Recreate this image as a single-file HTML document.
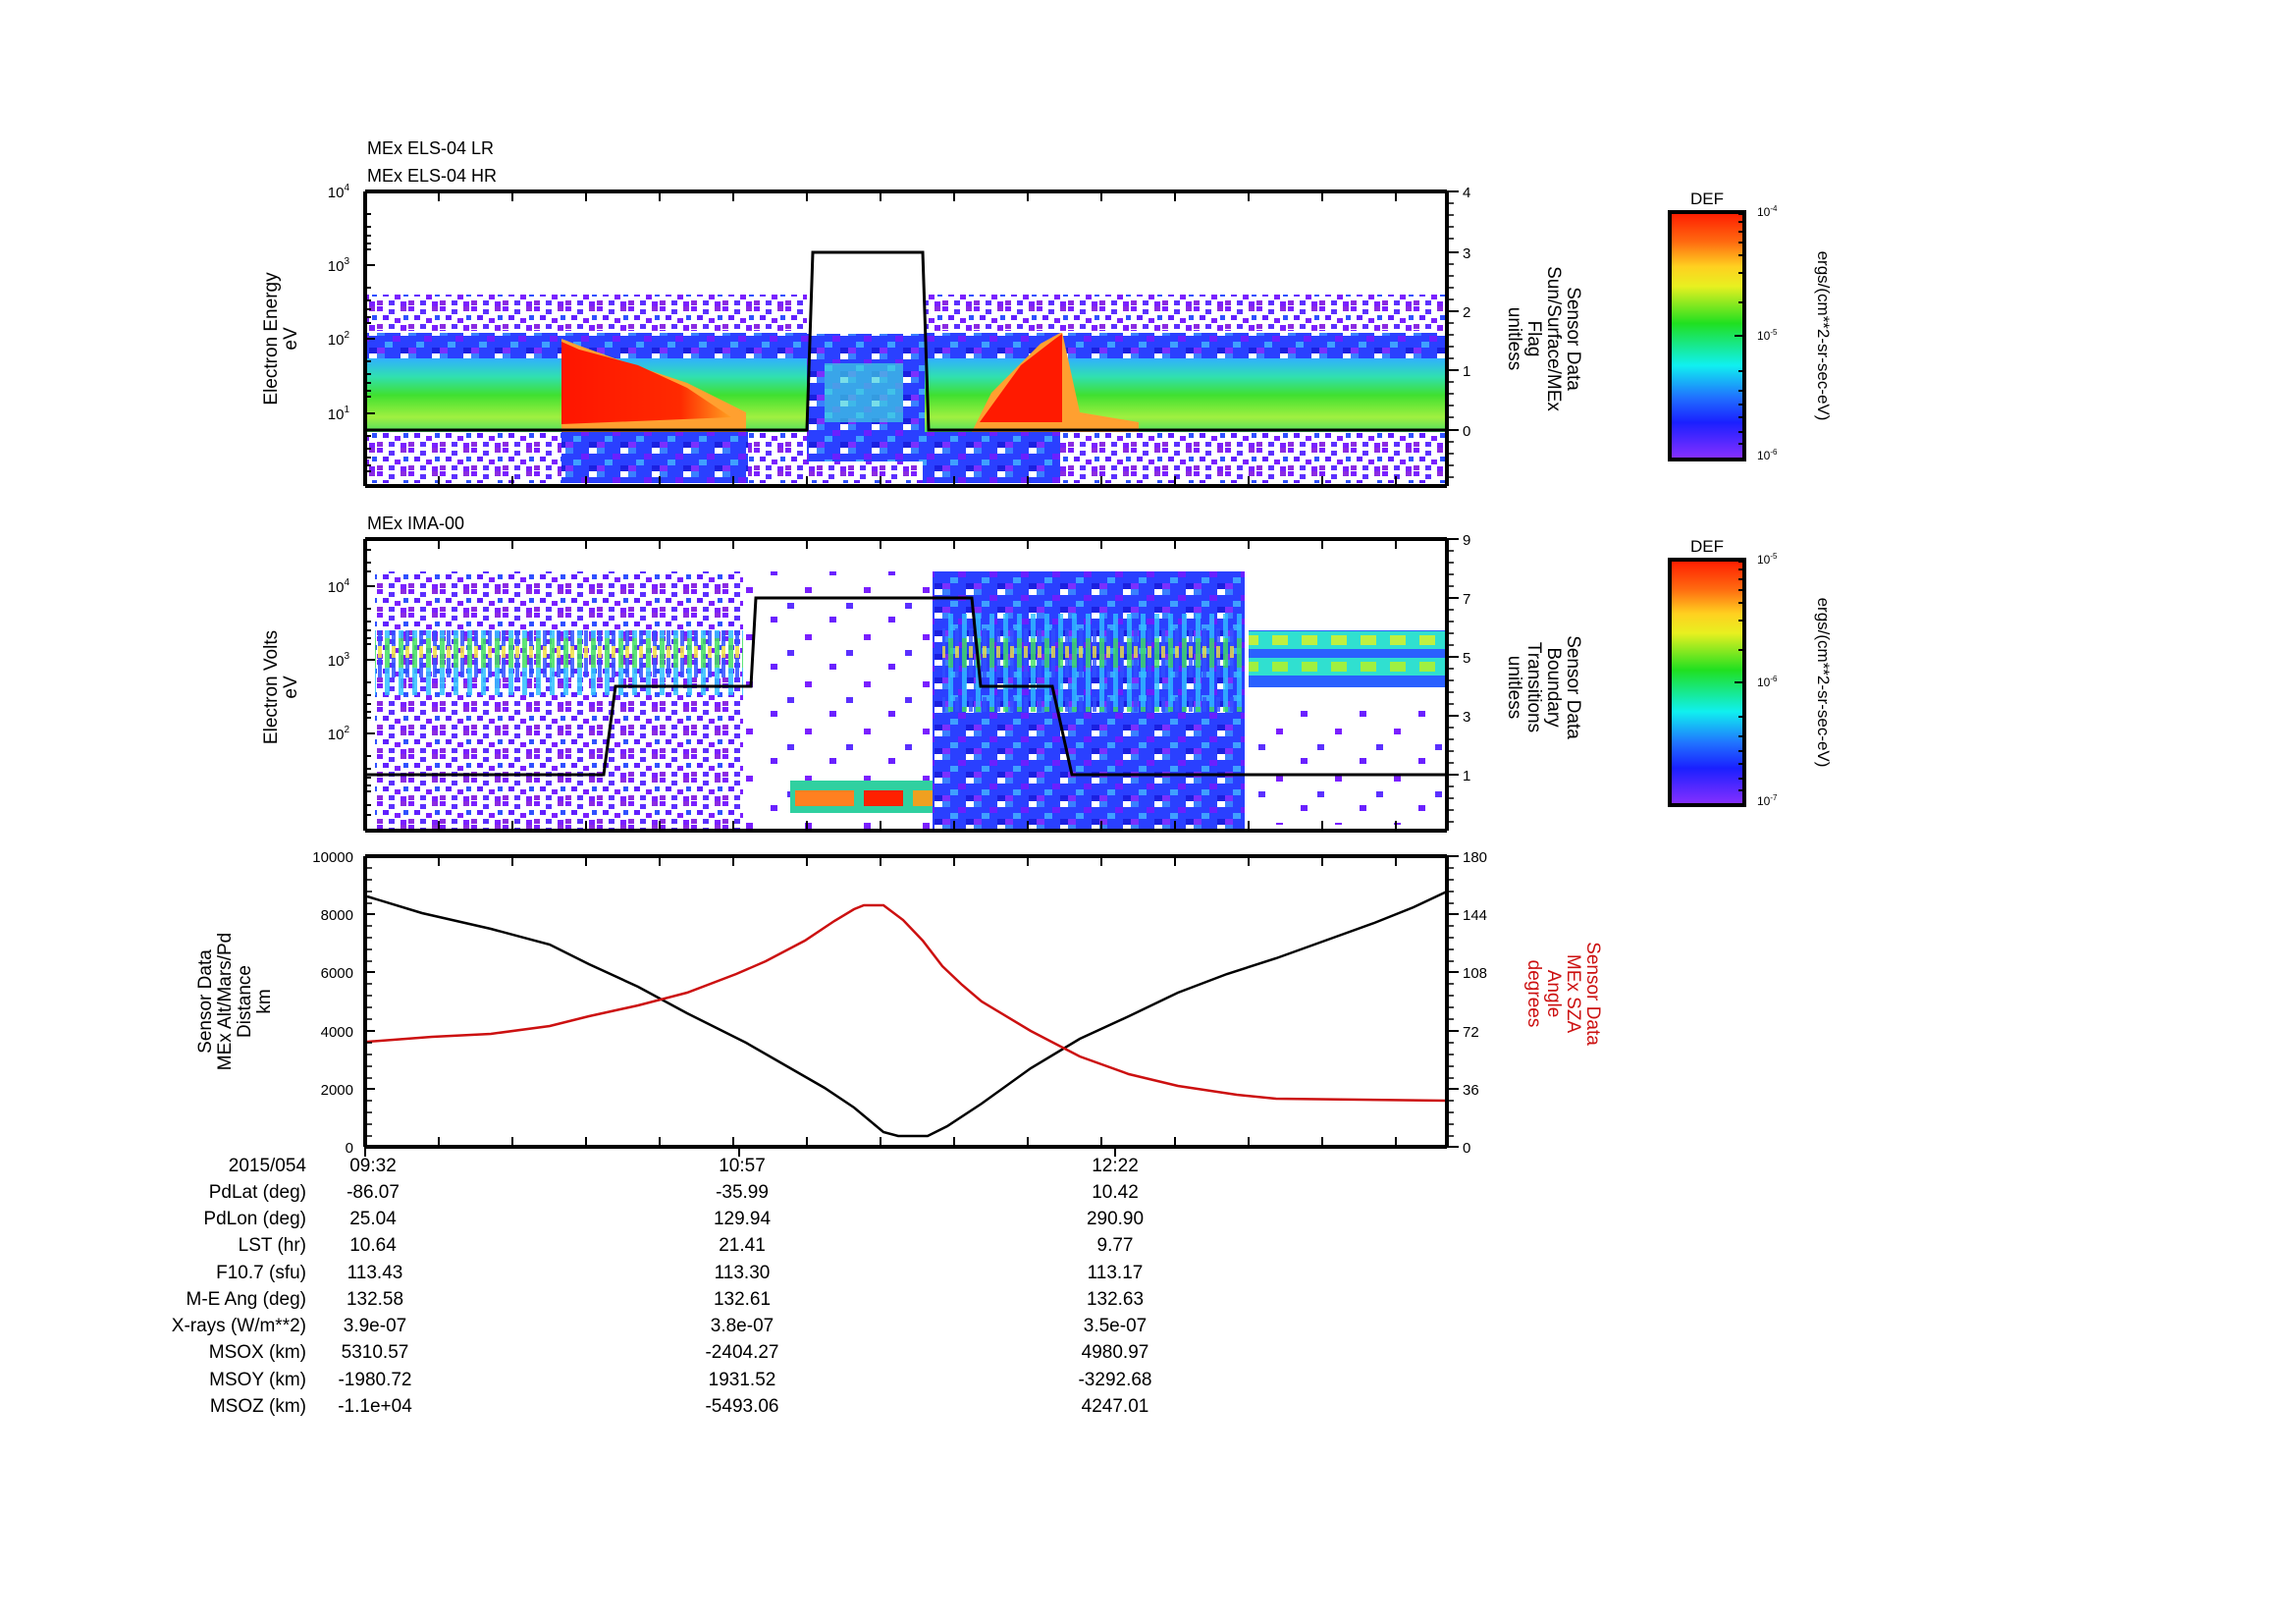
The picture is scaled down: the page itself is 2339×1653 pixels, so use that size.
<!DOCTYPE html>
<html><head><meta charset="utf-8"><style>
html,body{margin:0;padding:0;background:#fff;}
svg{display:block;font-family:"Liberation Sans",sans-serif;}
</style></head><body>
<svg width="2339" height="1653" viewBox="0 0 2339 1653" xmlns="http://www.w3.org/2000/svg">
<defs>
<linearGradient id="cb" x1="0" y1="0" x2="0" y2="1">
<stop offset="0" stop-color="#ff1a00"/><stop offset="0.12" stop-color="#ff6a10"/><stop offset="0.22" stop-color="#ffd020"/><stop offset="0.3" stop-color="#e8f020"/><stop offset="0.45" stop-color="#20e020"/><stop offset="0.62" stop-color="#10f0f0"/><stop offset="0.75" stop-color="#2070ff"/><stop offset="0.85" stop-color="#1a20ff"/><stop offset="1" stop-color="#8a30ff"/>
</linearGradient>
<linearGradient id="band" x1="0" y1="0" x2="0" y2="1">
<stop offset="0" stop-color="#30b0ff"/><stop offset="0.25" stop-color="#30e0b0"/><stop offset="0.5" stop-color="#40e030"/><stop offset="0.8" stop-color="#a0f040"/><stop offset="1" stop-color="#50e060"/>
</linearGradient>
<linearGradient id="red" x1="0" y1="0" x2="1" y2="0">
<stop offset="0" stop-color="#ff1500"/><stop offset="0.7" stop-color="#ff2a00"/><stop offset="1" stop-color="#ffa020"/>
</linearGradient>
<pattern id="pn" width="32" height="24" patternUnits="userSpaceOnUse">
<rect x="0" y="0" width="6" height="5" fill="#7a1fff"/><rect x="12" y="3" width="6" height="5" fill="#5b30ff"/><rect x="24" y="0" width="6" height="5" fill="#8a2be2"/><rect x="6" y="9" width="6" height="5" fill="#6020ff"/><rect x="18" y="12" width="6" height="5" fill="#7a1fff"/><rect x="27" y="9" width="5" height="5" fill="#3050ff"/><rect x="0" y="18" width="6" height="5" fill="#8a2be2"/><rect x="12" y="18" width="6" height="5" fill="#5b30ff"/><rect x="24" y="19" width="6" height="5" fill="#7a1fff"/>
</pattern>
<pattern id="bn" width="32" height="24" patternUnits="userSpaceOnUse">
<rect width="32" height="24" fill="#2a40ff"/><rect x="0" y="0" width="8" height="6" fill="#3a80ff"/><rect x="16" y="6" width="8" height="6" fill="#6a20ff"/><rect x="8" y="12" width="8" height="6" fill="#40a0ff"/><rect x="24" y="18" width="8" height="6" fill="#1a20e0"/><rect x="24" y="0" width="8" height="6" fill="#fff"/><rect x="0" y="18" width="8" height="6" fill="#7a30ff"/>
</pattern>
<pattern id="sp" width="60" height="48" patternUnits="userSpaceOnUse">
<rect x="5" y="4" width="7" height="6" fill="#6a20ff"/><rect x="40" y="22" width="7" height="6" fill="#7a1fff"/><rect x="22" y="38" width="7" height="6" fill="#5b30ff"/>
</pattern>
<pattern id="st" width="14" height="70" patternUnits="userSpaceOnUse">
<rect x="0" y="0" width="5" height="70" fill="#30c0ff"/><rect x="0" y="20" width="5" height="30" fill="#40e060"/><rect x="7" y="10" width="4" height="50" fill="#3050ff"/><rect x="7" y="28" width="4" height="12" fill="#f0e040"/>
</pattern>
<pattern id="bd" width="30" height="58" patternUnits="userSpaceOnUse">
<rect width="30" height="58" fill="#2a60ff"/><rect x="0" y="5" width="30" height="18" fill="#30e0d0"/><rect x="6" y="9" width="16" height="10" fill="#c0f040"/><rect x="0" y="32" width="30" height="18" fill="#30e0d0"/><rect x="6" y="36" width="16" height="10" fill="#a0f040"/>
</pattern>
</defs>

<!-- Panel 1 -->
<rect x="374" y="300" width="1098" height="40" fill="url(#pn)"/>
<rect x="374" y="338" width="1098" height="32" fill="url(#bn)"/>
<rect x="374" y="365" width="1098" height="75" fill="url(#band)"/>
<rect x="374" y="440" width="1098" height="52" fill="url(#pn)"/>
<rect x="572" y="440" width="190" height="52" fill="url(#bn)"/>
<rect x="940" y="440" width="140" height="52" fill="url(#bn)"/>
<rect x="822" y="300" width="120" height="70" fill="#fff"/>
<rect x="822" y="340" width="120" height="130" fill="url(#bn)"/>
<rect x="840" y="370" width="80" height="60" fill="#40d0e0" opacity="0.7"/>
<path d="M572 440 L572 345 L590 352 L640 370 L700 390 L760 420 L760 440 Z" fill="#ffa030"/>
<path d="M572 432 L572 348 L590 356 L650 372 L700 395 L745 425 Z" fill="url(#red)"/>
<path d="M990 440 L1010 400 L1060 350 L1082 338 L1100 420 L1160 430 L1160 440 Z" fill="#ffa030"/>
<path d="M998 430 L1040 372 L1075 345 L1082 340 L1082 430 Z" fill="#ff1a00"/>
<line x1="374" y1="338" x2="1472" y2="338" stroke="#fff" stroke-width="2"/>
<polyline points="374,438 822,438 828,257 940,257 946,438 1472,438" fill="none" stroke="#000" stroke-width="3"/>

<!-- Panel 2 -->
<rect x="382" y="582" width="375" height="262" fill="url(#pn)"/>
<rect x="382" y="642" width="375" height="66" fill="url(#st)" opacity="0.85"/>
<rect x="757" y="582" width="193" height="262" fill="url(#sp)"/>
<rect x="805" y="795" width="165" height="33" fill="#30d0a0"/>
<rect x="810" y="805" width="60" height="16" fill="#ff8020"/>
<rect x="880" y="805" width="40" height="16" fill="#ff2000"/>
<rect x="930" y="805" width="35" height="16" fill="#f0a020"/>
<rect x="950" y="582" width="318" height="262" fill="url(#bn)"/>
<rect x="960" y="625" width="305" height="100" fill="url(#st)" opacity="0.8"/>
<rect x="1272" y="642" width="200" height="58" fill="url(#bd)"/>
<rect x="1280" y="720" width="190" height="120" fill="url(#sp)"/>
<polyline points="374,789 615,789 627,699 765,699 770,609 990,609 999,699 1072,699 1092,789 1472,789" fill="none" stroke="#000" stroke-width="3"/>

<!-- Panel 3 curves -->
<polyline points="374,913 430,930 500,946 560,962 600,982 650,1005 700,1032 760,1062 800,1085 840,1108 870,1128 900,1153 915,1157 945,1157 965,1147 1000,1124 1050,1088 1100,1058 1150,1035 1200,1011 1250,992 1300,976 1350,958 1400,940 1440,924 1474,908" fill="none" stroke="#000" stroke-width="2.5"/>
<polyline points="374,1061 440,1056 500,1053 560,1045 600,1035 650,1024 700,1011 750,992 780,979 820,958 850,938 870,926 880,922 900,922 920,937 940,958 960,984 980,1003 1000,1020 1050,1050 1100,1076 1150,1094 1200,1106 1260,1115 1300,1119 1474,1121" fill="none" stroke="#cc1010" stroke-width="2.5"/>

<!-- Axes frames -->
<g stroke="#000" fill="none">
<path d="M372 195 V495 M1474 195 V495 M372 195 H1474 M372 495 H1474" stroke-width="4"/>
<path d="M372 549 V846 M1474 549 V846 M372 549 H1474 M372 846 H1474" stroke-width="4"/>
<path d="M372 872 V1168 M1474 872 V1168 M372 872 H1474 M372 1168 H1474" stroke-width="4"/>
</g>
<g stroke="#000" stroke-width="2">
<path d="M447 195v10M522 195v10M597 195v10M672 195v10M747 195v10M822 195v10M897 195v10M972 195v10M1047 195v10M1122 195v10M1197 195v10M1272 195v10M1347 195v10M1422 195v10
M447 495v-10M522 495v-10M597 495v-10M672 495v-10M747 495v-10M822 495v-10M897 495v-10M972 495v-10M1047 495v-10M1122 495v-10M1197 495v-10M1272 495v-10M1347 495v-10M1422 495v-10
M447 549v10M522 549v10M597 549v10M672 549v10M747 549v10M822 549v10M897 549v10M972 549v10M1047 549v10M1122 549v10M1197 549v10M1272 549v10M1347 549v10M1422 549v10
M447 846v-10M522 846v-10M597 846v-10M672 846v-10M747 846v-10M822 846v-10M897 846v-10M972 846v-10M1047 846v-10M1122 846v-10M1197 846v-10M1272 846v-10M1347 846v-10M1422 846v-10
M447 872v10M522 872v10M597 872v10M672 872v10M747 872v10M822 872v10M897 872v10M972 872v10M1047 872v10M1122 872v10M1197 872v10M1272 872v10M1347 872v10M1422 872v10
M447 1168v-10M522 1168v-10M597 1168v-10M672 1168v-10M747 1168v-10M822 1168v-10M897 1168v-10M972 1168v-10M1047 1168v-10M1122 1168v-10M1197 1168v-10M1272 1168v-10M1347 1168v-10M1422 1168v-10
M372 1168v10M753 1168v10M1136 1168v10"/>
<path d="M372 195h10M372 270h10M372 345h10M372 421h10M372 218h6M372 231h6M372 240h6M372 248h6M372 254h6M372 293h6M372 306h6M372 315h6M372 323h6M372 329h6M372 368h6M372 381h6M372 390h6M372 398h6M372 404h6M372 444h6M372 457h6M372 466h6M372 474h6M372 480h6"/>
<path d="M372 597h10M372 672h10M372 747h10M372 620h6M372 633h6M372 642h6M372 650h6M372 656h6M372 695h6M372 708h6M372 717h6M372 725h6M372 731h6M372 770h6M372 783h6M372 792h6M372 800h6M372 806h6M372 820h6M372 830h6M372 560h6M372 573h6M372 582h6"/>
<path d="M1474 195h12M1474 257h12M1474 317h12M1474 377h12M1474 438h12M1474 549h12M1474 609h12M1474 669h12M1474 729h12M1474 789h12M1474 872h12M1474 931h12M1474 990h12M1474 1050h12M1474 1109h12M1474 1168h12M372 931h10M372 990h10M372 1050h10M372 1109h10"/>
</g>
<g stroke="#000" stroke-width="1.5">
<path d="M1474 207h7M1474 219h7M1474 231h7M1474 243h7M1474 269h7M1474 281h7M1474 293h7M1474 305h7M1474 329h7M1474 341h7M1474 353h7M1474 365h7M1474 389h7M1474 401h7M1474 413h7M1474 425h7M1474 450h7M1474 462h7M1474 474h7M1474 486h7
M1474 561h7M1474 573h7M1474 585h7M1474 597h7M1474 621h7M1474 633h7M1474 645h7M1474 657h7M1474 681h7M1474 693h7M1474 705h7M1474 717h7M1474 741h7M1474 753h7M1474 765h7M1474 777h7M1474 801h7M1474 813h7M1474 825h7M1474 837h7
M1474 884h7M1474 896h7M1474 908h7M1474 920h7M1474 943h7M1474 955h7M1474 967h7M1474 979h7M1474 1002h7M1474 1014h7M1474 1026h7M1474 1038h7M1474 1062h7M1474 1074h7M1474 1086h7M1474 1098h7M1474 1121h7M1474 1133h7M1474 1145h7M1474 1157h7
M372 884h7M372 896h7M372 908h7M372 920h7M372 943h7M372 955h7M372 967h7M372 979h7M372 1002h7M372 1014h7M372 1026h7M372 1038h7M372 1062h7M372 1074h7M372 1086h7M372 1098h7M372 1121h7M372 1133h7M372 1145h7M372 1157h7"/>
</g>

<g font-size="18" fill="#000">
<text x="374" y="157">MEx ELS-04 LR</text>
<text x="374" y="185">MEx ELS-04 HR</text>
<text x="374" y="539">MEx IMA-00</text>
</g>
<g font-size="15" fill="#000" text-anchor="end">
<text x="356" y="201">10<tspan dy="-7" font-size="10">4</tspan></text>
<text x="356" y="276">10<tspan dy="-7" font-size="10">3</tspan></text>
<text x="356" y="351">10<tspan dy="-7" font-size="10">2</tspan></text>
<text x="356" y="427">10<tspan dy="-7" font-size="10">1</tspan></text>
<text x="356" y="603">10<tspan dy="-7" font-size="10">4</tspan></text>
<text x="356" y="678">10<tspan dy="-7" font-size="10">3</tspan></text>
<text x="356" y="753">10<tspan dy="-7" font-size="10">2</tspan></text>
<text x="360" y="878">10000</text><text x="360" y="937">8000</text><text x="360" y="996">6000</text><text x="360" y="1056">4000</text><text x="360" y="1115">2000</text><text x="360" y="1174">0</text>
</g>
<g font-size="15" fill="#000">
<text x="1490" y="201">4</text><text x="1490" y="263">3</text><text x="1490" y="323">2</text><text x="1490" y="383">1</text><text x="1490" y="444">0</text>
<text x="1490" y="555">9</text><text x="1490" y="615">7</text><text x="1490" y="675">5</text><text x="1490" y="735">3</text><text x="1490" y="795">1</text>
<text x="1490" y="878">180</text><text x="1490" y="937">144</text><text x="1490" y="996">108</text><text x="1490" y="1056">72</text><text x="1490" y="1115">36</text><text x="1490" y="1174">0</text>
</g>

<g font-size="19" fill="#000" text-anchor="middle">
<text transform="translate(282,345) rotate(-90)">Electron Energy</text>
<text transform="translate(302,345) rotate(-90)">eV</text>
<text transform="translate(282,700) rotate(-90)">Electron Volts</text>
<text transform="translate(302,700) rotate(-90)">eV</text>
<text transform="translate(215,1020) rotate(-90)">Sensor Data</text>
<text transform="translate(235,1020) rotate(-90)">MEx Alt/Mars/Pd</text>
<text transform="translate(255,1020) rotate(-90)">Distance</text>
<text transform="translate(275,1020) rotate(-90)">km</text>
<text transform="translate(1597,345) rotate(90)">Sensor Data</text>
<text transform="translate(1577,345) rotate(90)">Sun/Surface/MEx</text>
<text transform="translate(1557,345) rotate(90)">Flag</text>
<text transform="translate(1537,345) rotate(90)">unitless</text>
<text transform="translate(1597,700) rotate(90)">Sensor Data</text>
<text transform="translate(1577,700) rotate(90)">Boundary</text>
<text transform="translate(1557,700) rotate(90)">Transitions</text>
<text transform="translate(1537,700) rotate(90)">unitless</text>
<g fill="#cc1010">
<text transform="translate(1617,1012) rotate(90)">Sensor Data</text>
<text transform="translate(1597,1012) rotate(90)">MEx SZA</text>
<text transform="translate(1577,1012) rotate(90)">Angle</text>
<text transform="translate(1557,1012) rotate(90)">degrees</text>
</g>
</g>

<rect x="1701" y="216" width="76" height="252" fill="url(#cb)" stroke="#000" stroke-width="4"/>
<rect x="1701" y="570" width="76" height="250" fill="url(#cb)" stroke="#000" stroke-width="4"/>
<g stroke="#000" stroke-width="2">
<path d="M1777 218h-6M1777 226h-6M1777 236h-6M1777 247h-6M1777 260h-6M1777 278h-6M1777 308h-6M1777 342h-10M1777 378h-6M1777 398h-6M1777 412h-6M1777 425h-6M1777 440h-6M1777 452h-6"/>
<path d="M1777 572h-6M1777 580h-6M1777 590h-6M1777 601h-6M1777 614h-6M1777 632h-6M1777 662h-6M1777 695h-10M1777 730h-6M1777 750h-6M1777 765h-6M1777 778h-6M1777 793h-6M1777 805h-6"/>
</g>
<g font-size="17" fill="#000" text-anchor="middle"><text x="1739" y="208">DEF</text><text x="1739" y="562">DEF</text></g>
<g font-size="12" fill="#000">
<text x="1790" y="220">10<tspan dy="-5" font-size="8">-4</tspan></text>
<text x="1790" y="346">10<tspan dy="-5" font-size="8">-5</tspan></text>
<text x="1790" y="468">10<tspan dy="-5" font-size="8">-6</tspan></text>
<text x="1790" y="574">10<tspan dy="-5" font-size="8">-5</tspan></text>
<text x="1790" y="699">10<tspan dy="-5" font-size="8">-6</tspan></text>
<text x="1790" y="820">10<tspan dy="-5" font-size="8">-7</tspan></text>
</g>
<g font-size="17" fill="#000" text-anchor="middle">
<text transform="translate(1852,342) rotate(90)">ergs/(cm**2-sr-sec-eV)</text>
<text transform="translate(1852,695) rotate(90)">ergs/(cm**2-sr-sec-eV)</text>
</g>

<g font-size="19" fill="#000">
<g text-anchor="end">
<text x="312" y="1193">2015/054</text><text x="312" y="1220">PdLat (deg)</text><text x="312" y="1247">PdLon (deg)</text><text x="312" y="1274">LST (hr)</text><text x="312" y="1302">F10.7 (sfu)</text><text x="312" y="1329">M-E Ang (deg)</text><text x="312" y="1356">X-rays (W/m**2)</text><text x="312" y="1383">MSOX (km)</text><text x="312" y="1411">MSOY (km)</text><text x="312" y="1438">MSOZ (km)</text>
</g>
<g text-anchor="middle">
<text x="380" y="1193">09:32</text><text x="380" y="1220">-86.07</text><text x="380" y="1247">25.04</text><text x="380" y="1274">10.64</text><text x="382" y="1302">113.43</text><text x="382" y="1329">132.58</text><text x="382" y="1356">3.9e-07</text><text x="382" y="1383">5310.57</text><text x="382" y="1411">-1980.72</text><text x="382" y="1438">-1.1e+04</text>
<text x="756" y="1193">10:57</text><text x="756" y="1220">-35.99</text><text x="756" y="1247">129.94</text><text x="756" y="1274">21.41</text><text x="756" y="1302">113.30</text><text x="756" y="1329">132.61</text><text x="756" y="1356">3.8e-07</text><text x="756" y="1383">-2404.27</text><text x="756" y="1411">1931.52</text><text x="756" y="1438">-5493.06</text>
<text x="1136" y="1193">12:22</text><text x="1136" y="1220">10.42</text><text x="1136" y="1247">290.90</text><text x="1136" y="1274">9.77</text><text x="1136" y="1302">113.17</text><text x="1136" y="1329">132.63</text><text x="1136" y="1356">3.5e-07</text><text x="1136" y="1383">4980.97</text><text x="1136" y="1411">-3292.68</text><text x="1136" y="1438">4247.01</text>
</g>
</g>
</svg>
</body></html>
